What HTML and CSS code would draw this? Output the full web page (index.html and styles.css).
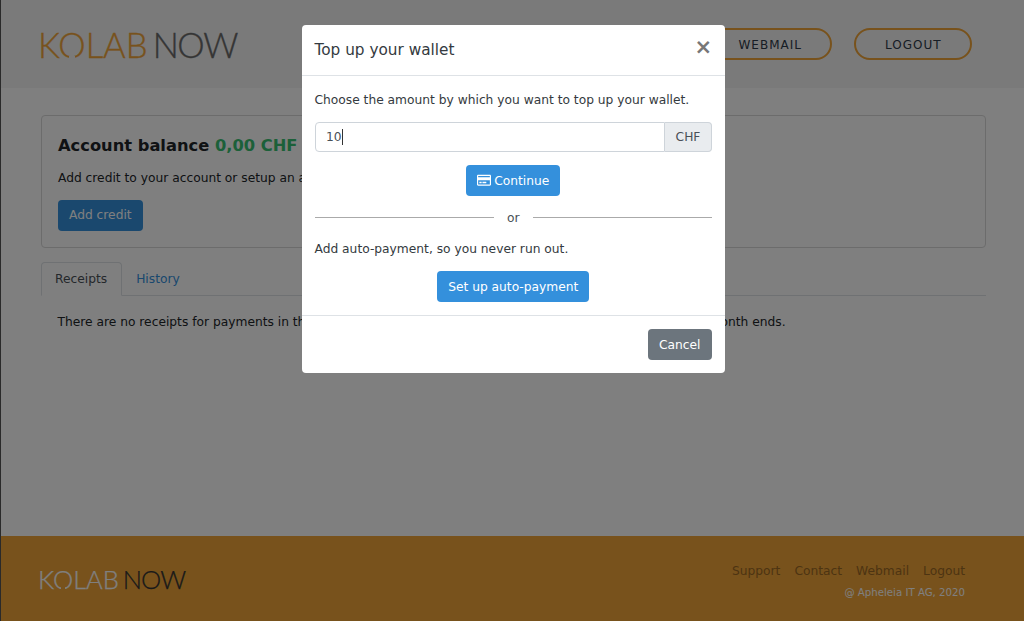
FILE: index.html

```html
<!DOCTYPE html>
<html lang="en">
<head>
  <meta charset="UTF-8" />
  <meta name="viewport" content="width=device-width, initial-scale=1.0"/>
  <title>Wallet - Kolab Now</title>
  <link rel="stylesheet" href="styles.css">
</head>
<body>
<div class="page">
  <header class="topbar">
    <a class="logo" href="#"><span class="logo-kolab">K<span class="logo-o">O</span>LAB</span><span class="logo-now">NOW</span></a>
    <nav class="topnav">
      <a href="#">Webmail</a>
      <a href="#">Logout</a>
    </nav>
  </header>
  <main class="content">
    <section class="card">
      <h1>Account balance <span class="balance">0,00 CHF</span></h1>
      <p>Add credit to your account or setup an automatic payment.</p>
      <button class="btn btn-dark-primary">Add credit</button>
    </section>
    <ul class="tabs">
      <li class="active"><a href="#">Receipts</a></li>
      <li><a href="#">History</a></li>
    </ul>
    <p class="tab-text">There are no receipts for payments in this account. Please, note that you can download receipts after the month ends.</p>
  </main>
  <footer class="bottombar">
    <a class="logo logo-small" href="#"><span class="logo-kolab">K<span class="logo-o">O</span>LAB</span><span class="logo-now">NOW</span></a>
    <div class="bottom-right">
      <nav class="bottomnav">
        <a href="#">Support</a>
        <a href="#">Contact</a>
        <a href="#">Webmail</a>
        <a href="#">Logout</a>
      </nav>
      <div class="copyright">@ Apheleia IT AG, 2020</div>
    </div>
  </footer>
</div>

<div class="backdrop">
  <div class="modal">
    <div class="modal-header">
      <h2>Top up your wallet</h2>
      <button class="close">×</button>
    </div>
    <div class="modal-body">
      <p>Choose the amount by which you want to top up your wallet.</p>
      <div class="input-group">
        <div class="amount">10<span class="caret"></span></div>
        <span class="suffix">CHF</span>
      </div>
      <div class="center">
        <button class="btn btn-primary btn-continue">
          <svg class="card-icon" viewBox="0 0 576 512"><path fill="currentColor" d="M527.9 32H48.1C21.5 32 0 53.5 0 80v352c0 26.5 21.5 48 48.1 48h479.8c26.6 0 48.1-21.5 48.1-48V80c0-26.5-21.5-48-48.1-48zM54.1 80h467.8c3.3 0 6 2.7 6 6v42H48.1V86c0-3.3 2.7-6 6-6zm467.8 352H54.1c-3.3 0-6-2.7-6-6V256h479.8v170c0 3.3-2.7 6-6 6zM192 332v40c0 6.6-5.4 12-12 12h-72c-6.6 0-12-5.4-12-12v-40c0-6.6 5.4-12 12-12h72c6.6 0 12 5.4 12 12zm192 0v40c0 6.6-5.4 12-12 12H236c-6.6 0-12-5.4-12-12v-40c0-6.6 5.4-12 12-12h136c6.6 0 12 5.4 12 12z"/></svg>
          Continue
        </button>
      </div>
      <div class="or"><span>or</span></div>
      <p>Add auto-payment, so you never run out.</p>
      <div class="center center-auto">
        <button class="btn btn-primary">Set up auto-payment</button>
      </div>
    </div>
    <div class="modal-footer">
      <button class="btn btn-secondary">Cancel</button>
    </div>
  </div>
</div>
</body>
</html>
```

FILE: styles.css

```css
:root {
  --orange: #f1a539;
  --primary: #3490dc;
  --text: #212529;
  --muted: #6c757d;
  --line: #dee2e6;
}
* { box-sizing: border-box; }
html, body { height: 100%; }
body {
  margin: 0;
  font-family: "DejaVu Sans", sans-serif;
  font-size: 12.25px;
  line-height: 1.5;
  color: var(--text);
  background: #fff;
  overflow: hidden;
}
a { text-decoration: none; }
p { margin: 0; }

.page {
  height: 621px;
  display: flex;
  flex-direction: column;
  border-left: 1px solid #555;
}

/* top */
.topbar {
  height: 88px;
  flex: none;
  display: flex;
  justify-content: space-between;
  align-items: flex-start;
  padding: 28px 52px 0 37px;
  background: #f4f4f4;
}
.logo {
  display: flex;
  gap: 5px;
  font-family: Lato, sans-serif;
  font-weight: 300;
  font-size: 34.6px;
  line-height: 34px;
  color: #6a6a6a;
  -webkit-text-stroke: 0.35px;
}
.logo-kolab { color: var(--orange); }
.logo-now { letter-spacing: -1.4px; }
.logo-o { position: relative; }
.logo-o::after {
  content: "";
  position: absolute;
  left: calc(50% - 3px);
  bottom: 3px;
  width: 6px;
  height: 6px;
  background: #f4f4f4;
}
.topnav { display: flex; gap: 22px; }
.topnav a {
  height: 32px;
  padding: 1px 28.5px 0;
  display: flex;
  align-items: center;
  border: 2px solid var(--orange);
  border-radius: 16px;
  font-size: 12px;
  letter-spacing: 1px;
  text-transform: uppercase;
  color: #2f3a4a;
}

/* content */
.content {
  flex: 1;
  padding: 27px 38px 0 40px;
}
.card {
  height: 133px;
  padding: 18px 16px;
  border: 1px solid #d8d8d8;
  border-radius: 4px;
}
.card h1 {
  margin: 0 0 11px;
  font-size: 16.3px;
  line-height: 24px;
  font-weight: bold;
}
.balance { color: #38c172; }
.tabs {
  display: flex;
  list-style: none;
  margin: 14px 0 0;
  padding: 0;
  border-bottom: 1px solid var(--line);
}
.tabs li { margin-bottom: -1px; }
.tabs a {
  display: block;
  height: 34px;
  padding: 0 14px 0 13px;
  line-height: 32px;
  border: 1px solid transparent;
  border-radius: 4px 4px 0 0;
  color: #3490dc;
}
.tabs .active a {
  color: #495057;
  border-color: var(--line) var(--line) #fff;
  background: #fff;
}
.tab-text { padding: 17px 16.5px 0; }

/* bottom */
.bottombar {
  height: 85px;
  flex: none;
  display: flex;
  justify-content: space-between;
  padding: 26px 59px 0 37px;
  background: var(--orange);
}
.logo-small {
  align-self: flex-start;
  gap: 4px;
  margin-top: 4px;
  font-size: 25.5px;
  line-height: 26px;
  -webkit-text-stroke: 0.25px;
}
.logo-small .logo-kolab { color: #fff; }
.logo-small .logo-now { color: #333; letter-spacing: -1px; }
.logo-small .logo-o::after { background: var(--orange); bottom: 2px; left: calc(50% - 2px); width: 4px; height: 5px; }
.bottom-right { text-align: right; }
.bottomnav { display: flex; gap: 14px; }
.bottomnav a { color: #9a6824; }
.copyright {
  margin-top: 5px;
  font-size: 10.2px;
  color: #fff;
}

/* buttons */
.btn {
  display: inline-block;
  height: 31px;
  padding: 0 10px;
  border: 1px solid transparent;
  border-radius: 4px;
  font-family: inherit;
  font-size: 12.25px;
  color: #fff;
}
.btn-primary { background: var(--primary); }
.btn-secondary { background: var(--muted); padding: 0 10.5px; }
.btn-dark-primary { background: var(--primary); margin-top: 12.6px; }
.btn-continue { padding-top: 1px; }
.card-icon {
  width: 14px;
  height: 12.5px;
  margin-right: -1px;
  vertical-align: -2px;
}

/* modal */
.backdrop {
  position: fixed;
  inset: 0;
  display: flex;
  justify-content: center;
  align-items: flex-start;
  padding: 25px 0 0 3px;
  background: rgba(0, 0, 0, 0.5);
}
.modal {
  width: 423px;
  background: #fff;
  border-radius: 4px;
  color: #343a40;
}
.modal-header {
  height: 51px;
  display: flex;
  justify-content: space-between;
  align-items: center;
  padding: 0 13px 0 12.5px;
  border-bottom: 1px solid var(--line);
}
.modal-header h2 {
  margin: 0;
  padding-top: 1px;
  font-size: 15.3px;
  font-weight: normal;
}
.close {
  border: none;
  padding: 0;
  margin-bottom: 6px;
  background: none;
  font-family: inherit;
  font-size: 21px;
  font-weight: bold;
  line-height: 1;
  color: #777;
}
.modal-body { padding: 15px 13px 0 12.5px; height: 239px; }
.input-group {
  display: flex;
  height: 30px;
  margin-top: 12.5px;
  padding-left: 0.5px;
}
.amount {
  flex: 1;
  display: flex;
  align-items: center;
  padding: 1px 0 0 10px;
  border: 1px solid #ced4da;
  border-radius: 4px 0 0 4px;
  color: #495057;
}
.caret {
  width: 1px;
  height: 16px;
  background: #333;
}
.suffix {
  width: 47px;
  display: flex;
  align-items: center;
  justify-content: center;
  border: 1px solid #ced4da;
  border-left: none;
  border-radius: 0 4px 4px 0;
  background: #e9ecef;
  color: #495057;
}
.center { text-align: center; margin-top: 13px; }
.center-auto { margin-top: 12.5px; }
.or {
  display: flex;
  align-items: center;
  gap: 13px;
  margin: 12px 0 13px;
  color: #495057;
}
.or span { padding-top: 1px; }
.or::before, .or::after {
  content: "";
  flex: 1;
  height: 1px;
  background: #aaa;
}
.modal-footer {
  height: 58px;
  display: flex;
  justify-content: flex-end;
  align-items: flex-start;
  padding: 13px 13px 0;
  border-top: 1px solid var(--line);
}
```
